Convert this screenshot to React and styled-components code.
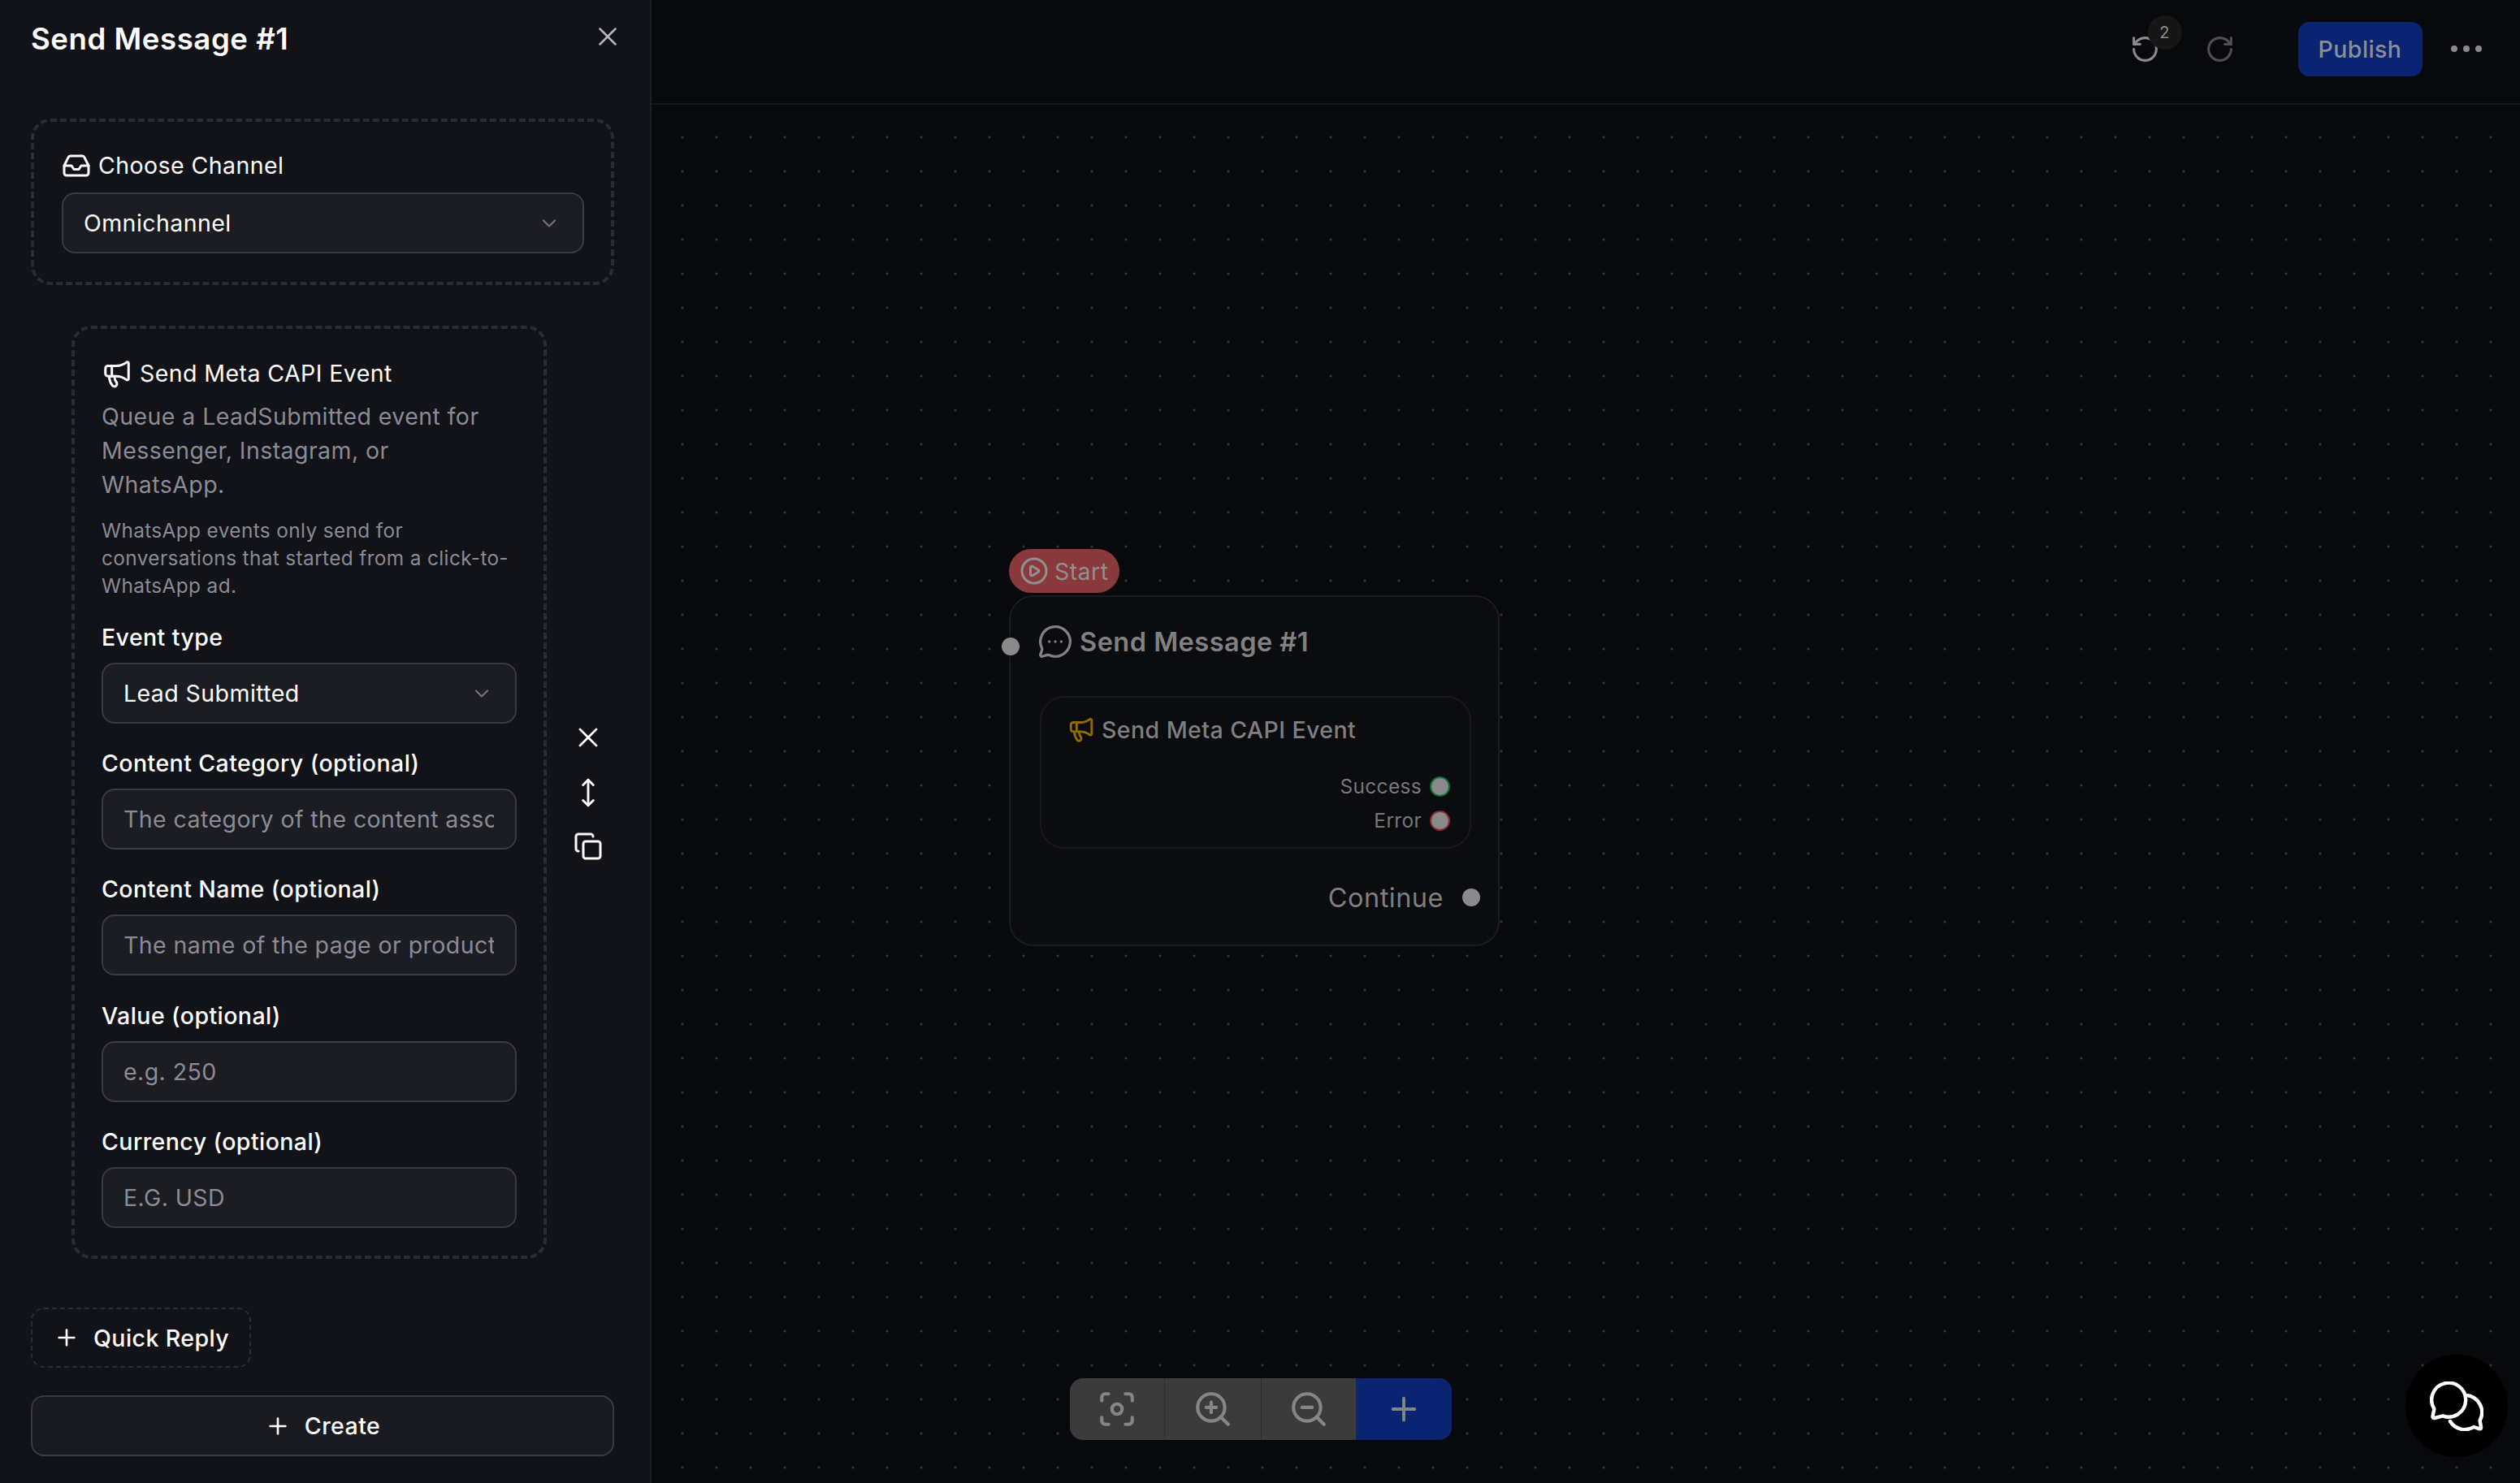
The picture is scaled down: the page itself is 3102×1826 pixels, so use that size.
import React from "react";
import styled, { createGlobalStyle } from "styled-components";
import {
  ChevronDown,
  CirclePlay,
  Copy,
  Focus,
  Inbox,
  Megaphone,
  MessageCircleMore,
  MoveVertical,
  Plus,
  RotateCcw,
  RotateCw,
  X,
  ZoomIn,
  ZoomOut,
} from "lucide-react";

const GlobalStyle = createGlobalStyle`
  html, body {
    margin: 0;
    height: 100%;
    overflow: hidden;
    background: #07090d;
  }

  * {
    box-sizing: border-box;
    letter-spacing: 0.015em;
  }

  #root {
    height: 100%;
    font-family: Inter, "Liberation Sans", sans-serif;
  }
`;

const Page = styled.div`
  display: flex;
  height: 100vh;
`;

const Panel = styled.aside`
  flex: 0 0 802px;
  display: flex;
  flex-direction: column;
  padding: 28px 44px 0 38px;
  background: #111319;
  border-right: 2px solid #1c1e24;
  color: #fff;
`;

const PanelHead = styled.div`
  display: flex;
  justify-content: space-between;
  align-items: center;
  height: 40px;
  margin-bottom: 78px;

  & h1 {
    margin: 0;
    font-size: 36.6px;
    font-weight: 600;
    line-height: 40px;
  }

  & svg {
    margin: -6px -11px 0 0;
    color: #b5b6bb;
  }
`;

const DashedBox = styled.section`
  border: 4px dashed #2a2c33;
  border-radius: 24px;
`;

const ChannelBox = styled(DashedBox)`
  height: 205px;
  padding: 40px 33px 0 34px;
`;

const BoxTitle = styled.div`
  display: flex;
  align-items: center;
  gap: 9px;
  height: 32px;
  font-size: 28.5px;
  line-height: 32px;
  color: #fff;
`;

const ChannelTitle = styled(BoxTitle)`
  height: 27px;
  margin-bottom: 20px;
`;

const Select = styled.div`
  display: flex;
  justify-content: space-between;
  align-items: center;
  height: 75px;
  padding: 0 27px 0 25px;
  background: #1c1d23;
  border: 2px solid #3a3b42;
  border-radius: 16px;
  font-size: 28.5px;
  color: #fff;

  & svg {
    color: #6f7076;
  }
`;

const ActionRow = styled.div`
  display: flex;
  align-items: center;
  margin: 50px 0 0 50px;
`;

const ActionBox = styled(DashedBox)`
  flex: 0 0 585px;
  height: 1149px;
  padding: 39px 33px 0;
`;

const Description = styled.p`
  margin: 16px 0 18px;
  font-size: 28.5px;
  line-height: 42px;
  color: #8a8b95;
`;

const Note = styled.p`
  margin: 0 0 30px;
  font-size: 24.4px;
  line-height: 34px;
  color: #8a8b95;
`;

const Field = styled.div`
  margin-bottom: 32.2px;

  &:last-child {
    margin-bottom: 0;
  }
`;

const Label = styled.label`
  display: block;
  margin-bottom: 14px;
  font-size: 28.5px;
  font-weight: 500;
  line-height: 34px;
`;

const Input = styled.input`
  display: block;
  width: 100%;
  height: 75px;
  padding: 0 26px 0 25px;
  background: #1c1d23;
  border: 2px solid #3a3b42;
  border-radius: 16px;
  outline: none;
  font: 400 28.5px Inter, "Liberation Sans", sans-serif;
  color: #fff;

  &::placeholder {
    color: #8a8b95;
    opacity: 1;
  }
`;

const SideActions = styled.div`
  flex: 1;
  display: flex;
  flex-direction: column;
  align-items: center;
  gap: 29px;
  padding: 0 0 4px 19px;
  color: #fff;
`;

const QuickReply = styled.button`
  display: flex;
  align-items: center;
  gap: 17px;
  align-self: flex-start;
  width: 271px;
  height: 74px;
  margin-top: 60px;
  padding: 0 0 0 26px;
  background: transparent;
  border: 2px dashed #2a2c33;
  border-radius: 16px;
  font: 500 28.5px Inter, "Liberation Sans", sans-serif;
  color: #fff;
`;

const CreateButton = styled.button`
  display: flex;
  justify-content: center;
  align-items: center;
  gap: 17px;
  height: 75px;
  margin-top: 34px;
  background: #1a1b21;
  border: 2px solid #3a3b42;
  border-radius: 16px;
  font: 500 28.5px Inter, "Liberation Sans", sans-serif;
  color: #fff;
`;

const Canvas = styled.main`
  position: relative;
  flex: 1;
  display: flex;
  flex-direction: column;
  background-color: #07090d;
  background-image: radial-gradient(circle, #333437 1.3px, transparent 1.8px);
  background-size: 42px 42px;
  background-position: -25px 106px;
`;

const TopBar = styled.header`
  display: flex;
  justify-content: flex-end;
  align-items: center;
  height: 129px;
  padding: 0 47px 7px 0;
  background: #07090d;
  border-bottom: 2px solid #15171b;
`;

const HistoryButton = styled.div`
  position: relative;
  display: flex;
  margin-right: ${(props) => props.$gap}px;
  color: ${(props) => props.$color};
`;

const HistoryBadge = styled.span`
  position: absolute;
  top: -23px;
  left: 22px;
  width: 42px;
  height: 42px;
  border-radius: 50%;
  background: #161616;
  font-size: 20px;
  line-height: 42px;
  text-align: center;
  color: #8c8c8c;
`;

const PublishButton = styled.button`
  width: 153px;
  height: 67px;
  margin-right: 35px;
  background: #0a2472;
  border: none;
  border-radius: 14px;
  font: 500 28.5px Inter, "Liberation Sans", sans-serif;
  color: #8a8e99;
`;

const MoreDots = styled.div`
  display: flex;
  gap: 6.5px;

  & span {
    width: 8.5px;
    height: 8.5px;
    border-radius: 50%;
    background: #8a8a8a;
  }
`;

const NodeWrap = styled.div`
  position: absolute;
  top: 676px;
  left: 440px;
  width: 604px;
`;

const StartPill = styled.div`
  display: inline-flex;
  align-items: center;
  gap: 7px;
  height: 54px;
  padding: 0 14px 0 13px;
  background: #8a393d;
  border-radius: 27px;
  font-size: 28.5px;
  color: #8f8f8f;
  vertical-align: top;
`;

const Node = styled.div`
  position: relative;
  height: 432px;
  margin-top: 3px;
  padding: 33px 33px 0 36px;
  background: #0b0c0f;
  border: 2px solid #1a1b1e;
  border-radius: 30px;
`;

const NodeTitle = styled.div`
  display: flex;
  align-items: center;
  gap: 8px;
  height: 44px;
  margin-left: -3px;
  font-size: 32.5px;
  font-weight: 600;
  color: #818181;
`;

const NodeCard = styled.div`
  height: 188px;
  margin-top: 45px;
  padding: 23px 26px 0 32px;
  border: 2px solid #17181b;
  border-radius: 30px;
`;

const CardTitle = styled.div`
  display: flex;
  align-items: center;
  gap: 8px;
  height: 32px;
  margin-bottom: 33px;
  font-size: 28.5px;
  font-weight: 500;
  color: #7f7f7f;

  & svg {
    color: #8f6b00;
  }
`;

const Outcome = styled.div`
  display: flex;
  justify-content: flex-end;
  align-items: center;
  gap: 10px;
  height: 42px;
  font-size: 24.4px;
  color: #787878;
`;

const OutcomeDot = styled.span`
  width: 25px;
  height: 25px;
  margin-right: -2px;
  border-radius: 50%;
  background: #8a8a8a;
  border: 2.5px solid ${(props) => props.$color};
`;

const ContinueRow = styled.div`
  display: flex;
  justify-content: flex-end;
  align-items: center;
  gap: 23px;
  height: 44px;
  margin: 38px -11px 0 0;
  font-size: 32.5px;
  color: #7f7f7f;
`;

const Handle = styled.span`
  display: block;
  width: 22px;
  height: 22px;
  border-radius: 50%;
  background: #8a8a8a;
  box-shadow: 0 0 0 2px #0b0c0f;
`;

const InputHandle = styled(Handle)`
  position: absolute;
  top: 50px;
  left: -11px;
`;

const ZoomBar = styled.div`
  position: absolute;
  bottom: 53px;
  left: 515px;
  display: flex;
  height: 76px;
  overflow: hidden;
  border-radius: 16px;
  background: #3b3b3b;
`;

const ZoomButton = styled.div`
  display: flex;
  justify-content: center;
  align-items: center;
  width: ${(props) => props.$width}px;
  border-left: ${(props) => (props.$divided ? "1.5px solid #2e2e2e" : "none")};
  background: ${(props) => (props.$primary ? "#0a2472" : "transparent")};
  color: #858585;
`;

const ChatBubble = styled.div`
  position: fixed;
  right: 15px;
  bottom: 32px;
  display: flex;
  justify-content: center;
  align-items: center;
  width: 126px;
  height: 126px;
  border-radius: 50%;
  background: #000;
`;

const ChatIcon = () => (
  <svg width="66" height="61" viewBox="0 0 66 61" fill="none" stroke="#fff" strokeWidth="4.4" strokeLinecap="round" strokeLinejoin="round">
    <path d="M5.4 33.8A21 21 0 1 1 16 42.4L6 45Q3 45.4 3.6 42.4Z" />
    <path d="M44.5 17A21 21 0 0 1 61.6 48L63 56Q63.4 59 60.6 58.2L54 56A21 21 0 0 1 25 49" />
  </svg>
);

const fields = [
  { label: "Content Category (optional)", placeholder: "The category of the content associated with the event" },
  { label: "Content Name (optional)", placeholder: "The name of the page or product associated with the event" },
  { label: "Value (optional)", placeholder: "e.g. 250" },
  { label: "Currency (optional)", placeholder: "E.G. USD" },
];

const App = () => {
  return (
    <Page>
      <GlobalStyle />
      <Panel>
        <PanelHead>
          <h1>Send Message #1</h1>
          <X size={38} strokeWidth={1.6} />
        </PanelHead>

        <ChannelBox>
          <ChannelTitle>
            <Inbox size={36} strokeWidth={2} />
            Choose Channel
          </ChannelTitle>
          <Select>
            Omnichannel
            <ChevronDown size={28} strokeWidth={2} />
          </Select>
        </ChannelBox>

        <ActionRow>
          <ActionBox>
            <BoxTitle>
              <Megaphone size={38} strokeWidth={1.9} />
              Send Meta CAPI Event
            </BoxTitle>
            <Description>Queue a LeadSubmitted event for Messenger, Instagram, or WhatsApp.</Description>
            <Note>WhatsApp events only send for conversations that started from a click-to-WhatsApp ad.</Note>
            <Field>
              <Label>Event type</Label>
              <Select>
                Lead Submitted
                <ChevronDown size={28} strokeWidth={2} />
              </Select>
            </Field>
            {fields.map((field) => (
              <Field key={field.label}>
                <Label>{field.label}</Label>
                <Input placeholder={field.placeholder} readOnly />
              </Field>
            ))}
          </ActionBox>
          <SideActions>
            <X size={40} strokeWidth={1.6} />
            <MoveVertical size={38} strokeWidth={1.8} />
            <Copy size={36} strokeWidth={2} />
          </SideActions>
        </ActionRow>

        <QuickReply>
          <Plus size={32} strokeWidth={2} />
          Quick Reply
        </QuickReply>
        <CreateButton>
          <Plus size={32} strokeWidth={2} />
          Create
        </CreateButton>
      </Panel>

      <Canvas>
        <TopBar>
          <HistoryButton $color="#8a8a8a" $gap={55}>
            <RotateCcw size={37} strokeWidth={2} />
            <HistoryBadge>2</HistoryBadge>
          </HistoryButton>
          <HistoryButton $color="#4f4f4f" $gap={78}>
            <RotateCw size={37} strokeWidth={2} />
          </HistoryButton>
          <PublishButton>Publish</PublishButton>
          <MoreDots>
            <span />
            <span />
            <span />
          </MoreDots>
        </TopBar>

        <NodeWrap>
          <StartPill>
            <CirclePlay size={36} strokeWidth={2} />
            Start
          </StartPill>
          <Node>
            <InputHandle />
            <NodeTitle>
              <MessageCircleMore size={44} strokeWidth={1.8} />
              Send Message #1
            </NodeTitle>
            <NodeCard>
              <CardTitle>
                <Megaphone size={34} strokeWidth={2} />
                Send Meta CAPI Event
              </CardTitle>
              <Outcome>
                Success
                <OutcomeDot $color="#0f6b3a" />
              </Outcome>
              <Outcome>
                Error
                <OutcomeDot $color="#8f2a30" />
              </Outcome>
            </NodeCard>
            <ContinueRow>
              Continue
              <Handle />
            </ContinueRow>
          </Node>
        </NodeWrap>

        <ZoomBar>
          <ZoomButton $width={116}>
            <Focus size={50} strokeWidth={2} />
          </ZoomButton>
          <ZoomButton $width={119} $divided>
            <ZoomIn size={50} strokeWidth={2} />
          </ZoomButton>
          <ZoomButton $width={117} $divided>
            <ZoomOut size={50} strokeWidth={2} />
          </ZoomButton>
          <ZoomButton $width={118} $primary>
            <Plus size={46} strokeWidth={2} />
          </ZoomButton>
        </ZoomBar>
      </Canvas>

      <ChatBubble>
        <ChatIcon />
      </ChatBubble>
    </Page>
  );
};

export default App;
